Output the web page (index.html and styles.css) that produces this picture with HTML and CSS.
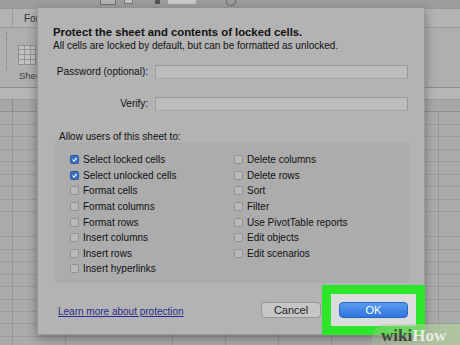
FILE: index.html
```html
<!DOCTYPE html>
<html lang="en">
  <head>
    <meta charset="UTF-8" />
    <meta name="viewport" content="width=device-width, initial-scale=1.0" />
    <title>Protect Sheet</title>
    <link rel="stylesheet" href="styles.css">
  </head>
  <body>
    <div class="app">
      <div class="toolbar">
        <span class="tool tool-box"></span>
        <span class="tool tool-sq"></span>
        <span class="tool tool-glyph"></span>
        <span class="tool tool-field"></span>
        <span class="tool tool-circle"></span>
      </div>
      <div class="tabs">
        <span class="tab-sep"></span>
        <span class="tab">Formulas</span>
      </div>
      <div class="ribbon">
        <span class="dots"></span>
        <div class="rib-group">
          <span class="rib-icon"></span>
          <span class="rib-label">Sheet</span>
        </div>
      </div>
      <div class="formula"></div>
      <div class="col-head"></div>
      <div class="cells"></div>
    </div>

    <div class="dialog">
      <h1 class="title">Protect the sheet and contents of locked cells.</h1>
      <p class="subtitle">All cells are locked by default, but can be formatted as unlocked.</p>

      <div class="fields">
        <label class="field-label">Password (optional):</label>
        <span class="input"></span>
        <label class="field-label">Verify:</label>
        <span class="input"></span>
      </div>

      <p class="allow">Allow users of this sheet to:</p>

      <div class="options">
        <div class="option"><span class="check on"><svg viewBox="0 0 9 9"><path d="M2 4.6 L3.9 6.5 L7.2 2.4" /></svg></span>Select locked cells</div>
        <div class="option"><span class="check"></span>Delete columns</div>
        <div class="option"><span class="check on"><svg viewBox="0 0 9 9"><path d="M2 4.6 L3.9 6.5 L7.2 2.4" /></svg></span>Select unlocked cells</div>
        <div class="option"><span class="check"></span>Delete rows</div>
        <div class="option"><span class="check"></span>Format cells</div>
        <div class="option"><span class="check"></span>Sort</div>
        <div class="option"><span class="check"></span>Format columns</div>
        <div class="option"><span class="check"></span>Filter</div>
        <div class="option"><span class="check"></span>Format rows</div>
        <div class="option"><span class="check"></span>Use PivotTable reports</div>
        <div class="option"><span class="check"></span>Insert columns</div>
        <div class="option"><span class="check"></span>Edit objects</div>
        <div class="option"><span class="check"></span>Insert rows</div>
        <div class="option"><span class="check"></span>Edit scenarios</div>
        <div class="option"><span class="check"></span>Insert hyperlinks</div>
      </div>

      <div class="actions">
        <a class="learn" href="#">Learn more about protection</a>
        <button class="btn cancel">Cancel</button>
        <span class="highlight"><button class="btn ok">OK</button></span>
      </div>
    </div>

    <div class="wikihow">wiki<span class="how">How</span></div>
  </body>
</html>
```

FILE: styles.css
```css
* {
  box-sizing: border-box;
}

body {
  margin: 0;
  width: 460px;
  height: 345px;
  overflow: hidden;
  position: relative;
  font-family: "Liberation Sans", Arial, sans-serif;
  background: #a9a9a9;
  color: #111;
}

/* spreadsheet behind the dialog */
.app {
  display: flex;
  flex-direction: column;
  height: 345px;
}

.toolbar {
  height: 8px;
  background: #9d9d9d;
  display: flex;
  align-items: flex-start;
  padding-left: 100px;
  gap: 8px;
}

.tool {
  display: block;
  background: #8a8a8a;
}

.tool-box {
  width: 16px;
  height: 5px;
  border: 1px solid #6f6f6f;
  border-top: 0;
  background: #b4b4b4;
}

.tool-sq {
  width: 9px;
  height: 4px;
  border: 1px solid #777;
  border-top: 0;
  background: #c5c5c5;
}

.tool-glyph {
  width: 5px;
  height: 4px;
  margin-left: 14px;
  background: #555;
}

.tool-field {
  width: 28px;
  height: 4px;
  background: #c9c9c9;
}

.tool-circle {
  width: 10px;
  height: 6px;
  margin-left: 22px;
  border: 1px solid #666;
  border-top: 0;
  border-radius: 0 0 5px 5px;
  background: transparent;
}

.tabs {
  height: 20px;
  background: #b3b3b3;
  border-top: 1px solid #999;
  border-bottom: 1px solid #9c9c9c;
  display: flex;
  align-items: center;
}

.tab-sep {
  width: 1px;
  height: 100%;
  margin-left: 12px;
  background: #9a9a9a;
}

.tab {
  margin-left: 11px;
  font-size: 10px;
  color: #333;
}

.ribbon {
  height: 60px;
  background: #aeafae;
  border-bottom: 1px solid #8c8c8c;
  display: flex;
  align-items: flex-start;
}

.dots {
  width: 1px;
  height: 38px;
  margin: 4px 0 0 6px;
  border-left: 1px dotted #7f7f7f;
}

.rib-group {
  display: flex;
  flex-direction: column;
  align-items: flex-start;
  margin-left: 11px;
  padding-top: 17px;
}

.rib-icon {
  width: 18px;
  height: 20px;
  border: 1px solid #8f8f8f;
  background:
    repeating-linear-gradient(90deg, transparent 0 5px, #949494 5px 6px),
    repeating-linear-gradient(0deg, transparent 0 4px, #949494 4px 5px),
    #c2c2c2;
}

.rib-label {
  margin-top: 5px;
  margin-left: 1px;
  font-size: 9.5px;
  color: #444;
}

.formula {
  height: 12px;
  background: #b6b6b6;
  border-bottom: 1px solid #9a9a9a;
}

.col-head {
  height: 12px;
  background: #a7a7a7;
  border-bottom: 1px solid #8e8e8e;
  background-image: repeating-linear-gradient(90deg, transparent 0 12px, #8a8a8a 12px 13px, transparent 13px 65.25px);
}

.cells {
  flex: 1;
  background-color: #ababab;
  background-image:
    repeating-linear-gradient(90deg, transparent 0 12px, #969696 12px 13px, transparent 13px 53.25px),
    repeating-linear-gradient(180deg, transparent 0 11.5px, #9c9c9c 11.5px 12.5px);
}

/* protect sheet dialog */
.dialog {
  position: absolute;
  left: 37px;
  top: 8px;
  width: 388px;
  height: 327px;
  background: #b3b3b3;
  border: 1px solid #999;
  border-top: 0;
  box-shadow: 0 3px 10px rgba(0, 0, 0, 0.35);
  padding: 18px 16px 0 15px;
}

.title {
  margin: 0;
  font-size: 11.3px;
  line-height: 13px;
  font-weight: bold;
}

.subtitle {
  margin: 1px 0 0;
  font-size: 10px;
  line-height: 12px;
}

.fields {
  display: grid;
  grid-template-columns: 95px 1fr;
  column-gap: 7px;
  row-gap: 18px;
  margin-top: 13px;
}

.field-label {
  font-size: 10px;
  line-height: 14px;
  text-align: right;
}

.input {
  height: 14px;
  background: #bcbcbc;
  border: 1px solid #999;
  border-bottom-color: #a8a8a8;
}

.allow {
  margin: 20px 0 0 6px;
  font-size: 10px;
  line-height: 11px;
}

.options {
  display: grid;
  grid-template-columns: 164px 1fr;
  grid-auto-rows: 15.6px;
  margin: 0 0 0 2px;
  width: 354px;
  padding: 10px 0 6px 15px;
  background: #acacac;
  border-radius: 2px;
}

.option {
  display: flex;
  align-items: center;
  font-size: 10px;
  white-space: nowrap;
}

.check {
  width: 9px;
  height: 9px;
  margin-right: 4px;
  border: 1px solid #929292;
  border-radius: 2px;
  background: #b9b9b9;
  display: flex;
}

.check.on {
  background: #3c6fc4;
  border-color: #2f5aa5;
}

.check svg {
  width: 100%;
  height: 100%;
  fill: none;
  stroke: #fff;
  stroke-width: 1.5;
}

.actions {
  display: flex;
  align-items: center;
  margin-top: 19px;
  padding-left: 5px;
}

.learn {
  font-size: 10px;
  color: #2b2c8e;
  text-decoration: underline;
  margin: 4px auto 0 0;
}

.btn {
  font-family: "Liberation Sans", Arial, sans-serif;
  font-size: 11px;
  height: 16px;
  padding: 0;
  border-radius: 4px;
  cursor: pointer;
}

.cancel {
  width: 60px;
  background: #c6c6c6;
  border: 1px solid #979797;
  color: #222;
}

/* annotation frame around OK */
.highlight {
  display: flex;
  margin: -17px -17px -17px 1px;
  padding: 8px;
  background: #dcdcdc;
  border: 9px solid #2de52a;
}

.ok {
  width: 69px;
  border: 1px solid #2a65c4;
  background: linear-gradient(#5a9cf0, #2f75dc);
  color: #fff;
}

.wikihow {
  position: absolute;
  right: 0;
  bottom: 0;
  width: 88px;
  height: 21px;
  padding: 4px 0 0 9px;
  border-radius: 14px 0 0 0;
  background: linear-gradient(90deg, rgba(170, 195, 150, 0.35), rgba(175, 205, 155, 0.8));
  font-family: "Liberation Serif", serif;
  font-weight: bold;
  font-size: 17px;
  line-height: 16px;
  color: #3a4a36;
}

.how {
  color: #e8eee4;
}
```
